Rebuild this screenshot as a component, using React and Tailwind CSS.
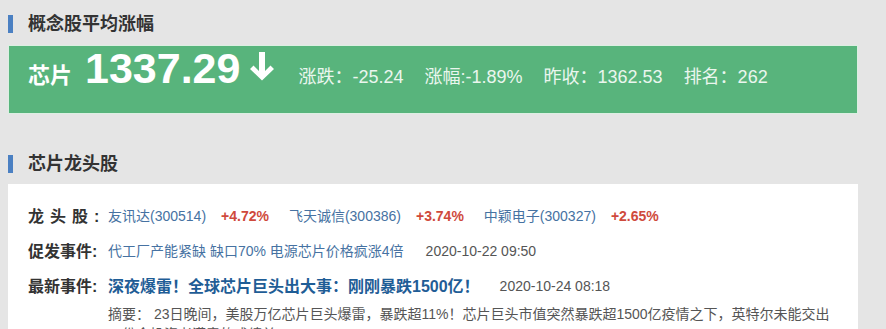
const font = "font-['Liberation_Sans','Noto_Sans_CJK_SC',sans-serif]"

const leaders = [
  { name: '友讯达(300514)', pct: '+4.72%' },
  { name: '飞天诚信(300386)', pct: '+3.74%' },
  { name: '中颖电子(300327)', pct: '+2.65%' },
]

const SectionTitle = ({ children }) => (
  <div className="flex h-[18px] items-center">
    <div className="h-[18px] w-[5px] bg-[#4b80c2]" />
    <h2 className="ml-[15px] text-[18px] font-bold leading-[18px] text-[#333]">{children}</h2>
  </div>
)

const DownArrow = () => (
  <svg width="24" height="30" viewBox="0 0 24 30">
    <path d="M9 0h6v19l5.5-5.5 3.5 3.5L12 28.5 0 17l3.5-3.5L9 19z" fill="#fff" />
  </svg>
)

const App = () => {
  return (
    <div className={`min-h-screen bg-[#e5e5e5] pl-2 pt-[15px] ${font}`}>
      <SectionTitle>概念股平均涨幅</SectionTitle>

      <div className="mt-[12px] flex h-[69px] w-[850px] items-baseline border border-[#dcefe2] bg-[#58b47c] pl-[19px] text-white">
        <span className="text-[22px] font-bold">芯片</span>
        <span className="ml-[13px] text-[43px] font-bold leading-[44px]">1337.29</span>
        <span className="ml-[10px] mt-[6px] self-start">
          <DownArrow />
        </span>
        <div className="ml-[24px] flex gap-[21px] text-[18px] text-[#eaf6ee]">
          <span>涨跌：-25.24</span>
          <span>涨幅:-1.89%</span>
          <span>昨收：1362.53</span>
          <span>排名：262</span>
        </div>
      </div>

      <div className="mt-[41px]">
        <SectionTitle>芯片龙头股</SectionTitle>
      </div>

      <div className="mt-[11px] h-[200px] w-[850px] bg-white pl-[20px] pt-[15px]">
        <div className="flex h-[35px] items-center whitespace-nowrap text-[14px]">
          <span className="w-[80px] shrink-0 text-[16px] font-bold tracking-[6px] text-[#333]">龙头股:</span>
          {leaders.map((l) => (
            <span key={l.name} className="mr-[20px] flex items-center">
              <span className="text-[#4672a2]">{l.name}</span>
              <span className="ml-[15px] font-bold text-[#cf4a3c]">{l.pct}</span>
            </span>
          ))}
        </div>

        <div className="flex h-[35px] items-center whitespace-nowrap text-[14px]">
          <span className="w-[80px] shrink-0 text-[16px] font-bold text-[#333]">促发事件:</span>
          <span className="text-[#4672a2]">代工厂产能紧缺 缺口70% 电源芯片价格疯涨4倍</span>
          <span className="ml-[22px] text-[#555]">2020-10-22 09:50</span>
        </div>

        <div className="flex h-[35px] items-center whitespace-nowrap">
          <span className="w-[80px] shrink-0 text-[16px] font-bold text-[#333]">最新事件:</span>
          <span className="text-[16px] font-bold text-[#1f5d96]">深夜爆雷！全球芯片巨头出大事：刚刚暴跌1500亿！</span>
          <span className="ml-[20px] text-[14px] text-[#555]">2020-10-24 08:18</span>
        </div>

        <p className="ml-[80px] w-[725px] text-[14px] leading-[20px] text-[#555]">
          摘要： 23日晚间，美股万亿芯片巨头爆雷，暴跌超11%！芯片巨头市值突然暴跌超1500亿疫情之下，英特尔未能交出一份令投资者满意的成绩单
        </p>
      </div>
    </div>
  )
}

export default App
